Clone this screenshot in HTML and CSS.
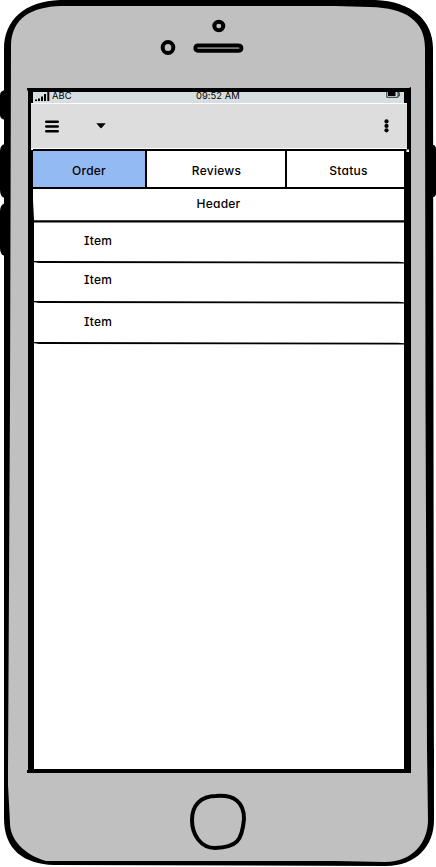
FILE: index.html
```html
<!DOCTYPE html>
<html lang="en">
<head>
<meta charset="utf-8">
<title>Orders</title>
<link rel="stylesheet" href="styles.css">
</head>
<body>
<div class="phone">
  <svg class="shell" width="436" height="867" viewBox="0 0 436 867" aria-hidden="true">
    <path d="M5 90Q0 91 0 95V115Q0 119 5 120ZM5 144Q0 145 0 151V190Q0 197 5 198ZM5 203Q0 205 0 211V248Q0 255 5 256ZM431 145H433Q436 145 436 150V193Q436 197 433 197H431ZM433 749H434V768H433Z"/>
    <path d="M60 0H375C412 1 433 21 433 48L434 820C434 846 416 866 386 866L54 865C24 864 4 850 4 818V49C4 20 25 1 60 0Z"/>
    <path fill="#c0c0c0" d="M61 6H335L370 7C406 8 425 21 425 48L425.5 400L427 749L428 820C428 842 413 862 385 862L335 861H46C25 855 10 840 10 823L8 785V769L10 400L11 45C12 18 31 7 61 6Z"/>
    <g fill="none" stroke="#000" stroke-width="4">
      <ellipse cx="168" cy="47.5" rx="5.3" ry="5.5"/>
      <ellipse cx="218.8" cy="26" rx="4.5" ry="4.2"/>
      <path fill="#807c7c" stroke-width="3.8" d="M198 45.4H238Q241.5 45.4 241.5 48.3Q241.5 50.8 238 50.8H199Q195.3 50.8 195.3 48.3Q195.3 45.4 198 45.4Z"/>
      <path d="M216 796Q244 794 244 819C242 841 237 847 215 848C201 848 192 835 192 820C192 805 201 796 216 796Z"/>
    </g>
    <path d="M27 88L409 88L411 87V773H27V770H28V91L27 90Z"/>
    <path fill="#fff" d="M33.5 92H404V769H34V220L33 200V150H31V103H33.5Z"/>
    <path fill="#fff" d="M404 103H407V149H404ZM406.5 149.5H409V152H406.5Z"/>
  </svg>
  <main class="screen">
    <div class="status-bar">
      <svg class="signal" width="15" height="9" viewBox="0 0 15 9"><path d="M0 7.5H2V9H0ZM3 6.5H5V9H3ZM6 4.5H8V9H6ZM9 2H11V9H9ZM12.3 0H14.3V9H12.3Z"/></svg>
      <span class="carrier">ABC</span>
      <span class="clock">09:52 AM</span>
      <svg class="battery" width="15" height="6" viewBox="0 0 15 6"><path fill="none" stroke="#283034" d="M.8 0V5.3H12V0M12 .7H13.3V4H12"/><path d="M2 0H9.5V4H2Z"/></svg>
    </div>
    <header class="toolbar">
      <svg class="menu" width="14" height="13" viewBox="0 0 14 13"><path stroke="#000" stroke-width="2.4" stroke-linecap="round" d="M1.2 1.8H12.8M1.2 6.5H12.8M1.2 11.2H12.8"/></svg>
      <svg class="caret" width="10" height="6" viewBox="0 0 10 6"><path d="M.3 .3H9.7L6 4.6Q5 5.7 4 4.6Z"/></svg>
      <svg class="more" width="5" height="14" viewBox="0 0 5 14"><circle cx="2.5" cy="2.4" r="2.1"/><circle cx="2.5" cy="6.9" r="2.1"/><circle cx="2.5" cy="11.3" r="2.1"/></svg>
    </header>
    <nav class="tabs">
      <div class="tab active">Order</div>
      <div class="tab reviews">Reviews</div>
      <div class="tab status">Status</div>
    </nav>
    <div class="list-header">Header</div>
    <svg class="rule" width="371" height="3" viewBox="0 0 371 3"><path d="M0 .3H371V2.4H0Z"/></svg>
    <div class="item first">Item</div>
    <svg class="rule" width="371" height="3" viewBox="0 0 371 3"><path d="M0 .1L6 0L365 .8L371 1.2V2.4L365 2.6L6 1.9L0 1Z"/></svg>
    <div class="item second">Item</div>
    <svg class="rule" width="371" height="3" viewBox="0 0 371 3"><path d="M0 .1L6 0L365 .8L371 1.2V2.4L365 2.6L6 1.9L0 1Z"/></svg>
    <div class="item third">Item</div>
    <svg class="rule" width="371" height="3" viewBox="0 0 371 3"><path d="M0 .1L6 0L365 .8L371 1.2V2.4L365 2.6L6 1.9L0 1Z"/></svg>
  </main>
</div>
</body>
</html>
```
FILE: styles.css
```css
* { box-sizing: border-box; }
body {
  margin: 0;
  background: #fff;
  color: #000;
  font: 450 12px/16px Inter, "Noto Sans", sans-serif;
  letter-spacing: .25px;
  font-feature-settings: "cv11", "cv08";
  overflow: hidden;
}
svg { display: block; flex: none; }
.phone { position: relative; width: 436px; height: 867px; }
.shell { position: absolute; inset: 0; }
.screen {
  position: relative;
  width: 436px;
  height: 867px;
  padding: 92px 32px 98px 33px;
}
.status-bar {
  display: grid;
  grid-template-columns: 17px 144px 190px 18px;
  height: 11px;
  padding-left: 2px;
  background: #d6dee1;
  font-size: 9.4px;
  font-weight: 400;
  line-height: 8px;
}
.carrier { letter-spacing: .1px; }
.clock { letter-spacing: .05px; }
.toolbar {
  display: flex;
  align-items: center;
  height: 44px;
  margin: 1px -3px 0 -2px;
  padding: 0 18.5px 0 14px;
  background: #ddd;
}
.caret { margin-left: 36.5px; }
.more { margin-left: auto; }
.tabs {
  display: grid;
  grid-template-columns: 114px 140px 1fr;
  height: 40px;
  margin-top: 1px;
  border-top: 2px solid #000;
  border-bottom: 2px solid #000;
}
.tab {
  display: flex;
  align-items: center;
  justify-content: center;
  padding: 4px 0 0 1px;
  border-right: 2px solid #000;
}
.active { background: #93baf2; padding-left: 0; }
.status { border-right: 0; padding-left: 6px; }
.list-header {
  height: 31px;
  padding-top: 7px;
  text-align: center;
}
.item { padding-left: 51px; }
.first { height: 38px; padding-top: 10px; }
.second { height: 37px; padding-top: 8px; }
.third { height: 38px; padding-top: 10px; }
```
